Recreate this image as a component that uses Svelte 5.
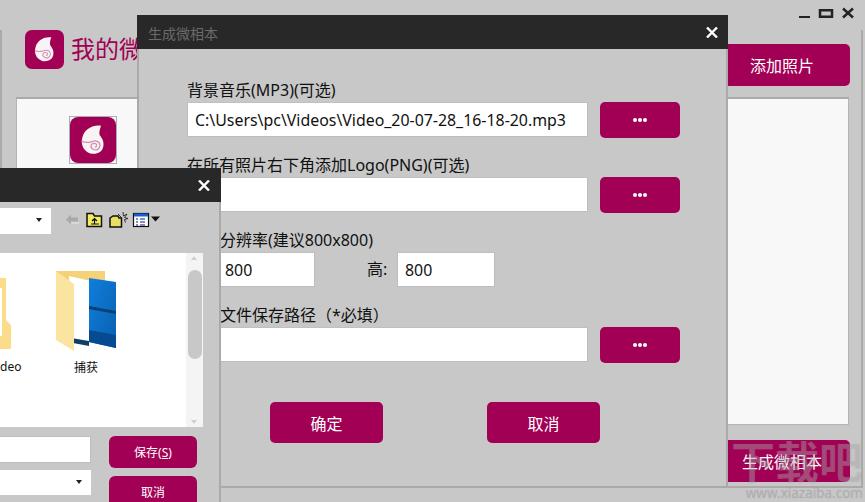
<script>
	const shell = "M27 7.500C20 6.500 13 10 11 17c-2 6 0 12 6 14.500 5 1.500 11 0 12-6 .8-4-1-7-3-9.500-1-2 0-6 1-8.500z";
</script>

{#snippet logo(size)}
	<svg class="logo" width={size} height={size} viewBox="0 0 40 40">
		<rect width="40" height="40" rx="7" fill="#a20055" />
		<path d={shell} fill="#f8f3f5" />
		<path d="M10 21c4 2 7 1 9 .5 3-1.500 7-.5 7 3s-3 5-6 3.500-2-5 1-5 2.500 3.500 .5 3" fill="none" stroke="#d68db0" stroke-width="1.100" />
	</svg>
{/snippet}

{#snippet dots()}
	<button class="btn dots" aria-label="browse"><i></i><i></i><i></i></button>
{/snippet}

{#snippet closeIcon()}
	<svg class="x" width="12" height="11" viewBox="0 0 12 11">
		<path d="M1 .5l10 10M11 .5l-10 10" stroke="#fff" stroke-width="2.400" fill="none" />
	</svg>
{/snippet}

<div class="screen">
	<section class="main-win">
		<div class="winbtns">
			<svg width="56" height="14" viewBox="0 0 56 14" fill="none" stroke="#222">
				<path d="M1 10h11" stroke-width="2" />
				<rect x="22" y="3.250" width="12" height="6.500" stroke-width="2.500" />
				<path d="M45 1.500l10 9M55 1.500L45 10.500" stroke-width="2.400" />
			</svg>
		</div>
		<div class="frame">
			<header class="top">
				<div class="brand">
					{@render logo(39)}
					<span class="app-title">我的微相本</span>
				</div>
				<button class="btn big">添加照片</button>
			</header>
			<div class="lists">
				<div class="photos">
					<div class="thumb">{@render logo(46)}</div>
				</div>
				<div class="names"></div>
			</div>
			<footer class="bottom">
				<button class="btn big">生成微相本</button>
			</footer>
		</div>
	</section>

	<section class="modal">
		<div class="titlebar modal-title">
			<span class="caption">生成微相本</span>
			{@render closeIcon()}
		</div>
		<div class="form">
			<label for="mp3">背景音乐(MP3)(可选)</label>
			<div class="row">
				<input id="mp3" value="C:\Users\pc\Videos\Video_20-07-28_16-18-20.mp3" />
				{@render dots()}
			</div>
			<label for="png">在所有照片右下角添加Logo(PNG)(可选)</label>
			<div class="row">
				<input id="png" />
				{@render dots()}
			</div>
			<label for="w" class="indent">分辨率(建议800x800)</label>
			<div class="row size">
				<input id="w" class="num first" value="800" />
				<span class="hi">高:</span>
				<input class="num" value="800" />
			</div>
			<label for="out" class="indent">文件保存路径（*必填）</label>
			<div class="row">
				<input id="out" />
				{@render dots()}
			</div>
			<div class="actions">
				<button class="btn act">确定</button>
				<button class="btn act">取消</button>
			</div>
		</div>
	</section>

	<section class="dialog">
		<div class="titlebar dlg-title">{@render closeIcon()}</div>
		<div class="tools">
			<div class="combo"><i class="caret"></i></div>
			<svg width="96" height="16" viewBox="0 0 96 16" class="toolicons">
				<path d="M1 7.500l5-5v3h7v4H6v3z" fill="#a9a9a9" />
				<path d="M6 11h8" stroke="#e8e8e8" />
				<path d="M22 4V1.500h6l1.500 2.500H36.500v10.500H22z" fill="#f1ec62" stroke="#111" stroke-width="1.500" />
				<path d="M29.500 11.500V6.500m-2.500 2.500l2.500-2.500L32 9M26 12h8" stroke="#111" fill="none" stroke-width="1.200" />
				<path d="M45 6l3-2h5l1 2h2.500v9H45z" fill="#e8e062" stroke="#111" stroke-width="1.500" />
				<path d="M58 0l.5 4 3.500-2-2.500 3.500 3.500 1-3.500 1 1 3M53 2l3 3" stroke="#222" fill="none" stroke-width=".9" />
				<rect x="68.500" y="1.500" width="15" height="13" fill="#fff" stroke="#111" stroke-width="1.200" />
				<rect x="69" y="1.500" width="14" height="3" fill="#1a5fd0" />
				<path d="M71 7h2m2 0h5M71 10h2m2 0h5M71 13h2m2 0h5" stroke="#0a1a88" stroke-width="1.200" />
				<path d="M86 4.500h9l-4.500 5z" fill="#111" />
			</svg>
		</div>
		<div class="browser">
			<div class="files">
				<div class="file cut">
					<svg width="11" height="72" viewBox="0 0 11 72">
						<path d="M0 0h6v42l5 5v24H0z" fill="#fbdc8b" />
						<path d="M0 10h2v48H0z" fill="#fff" />
					</svg>
					<span>deo</span>
				</div>
				<div class="file capture">
					<svg width="66" height="84" viewBox="0 0 66 84">
						<defs>
							<linearGradient id="win" x1="0" y1="0" x2="1" y2="1">
								<stop offset="0" stop-color="#0f7fdc" />
								<stop offset="1" stop-color="#0a5fb0" />
							</linearGradient>
						</defs>
						<path d="M1 1h49v12L20 40 1 40z" fill="#f3d27a" />
						<path d="M14 6l22 5v60l-20-3z" fill="#fff" />
						<path d="M34 8l27 4v66l-27-6z" fill="url(#win)" />
						<path d="M34 36l27 5v3l-27-5z" fill="#0a3f78" />
						<path d="M34 60l27 5v13l-27-6z" fill="#064a92" />
						<path d="M16 68l18 3v5l-16-3z" fill="#123c68" />
						<path d="M1 1l18 13v67L1 70z" fill="#fbe3a0" />
					</svg>
					<span>捕获</span>
				</div>
			</div>
			<div class="scroll">
				<i class="up"></i>
				<div class="thumbbar"></div>
				<i class="down"></i>
			</div>
		</div>
		<div class="dlg-foot">
			<div class="fields">
				<div class="field"></div>
				<div class="field pick"><i class="caret"></i></div>
			</div>
			<div class="dlg-btns">
				<button class="btn small">保存(<u>S</u>)</button>
				<button class="btn small">取消</button>
			</div>
		</div>
	</section>

	<div class="mark">
		<span class="mark-cn">下载吧</span>
		<span class="mark-en">www.xiazaiba.com</span>
	</div>
</div>

<style>
	:global(body) {
		margin: 0;
		background: #c8c8c8;
	}

	.screen {
		position: relative;
		width: 865px;
		height: 502px;
		overflow: hidden;
		background: #c8c8c8;
		font-family: "Noto Sans", "Noto Sans CJK SC", sans-serif;
		color: #111;
	}

	.btn {
		border: 0;
		padding: 0;
		background: #a20055;
		color: #fff;
		border-radius: 5px;
		font: inherit;
	}

	.main-win {
		width: 865px;
		height: 502px;
		display: flex;
		flex-direction: column;
	}

	.winbtns {
		height: 30px;
		box-sizing: border-box;
		padding: 7px 11px 0 0;
		display: flex;
		justify-content: flex-end;
	}

	.frame {
		width: 863px;
		height: 458px;
		box-sizing: border-box;
		border-left: 2px solid #aaa;
		border-right: 2px solid #aaa;
		border-bottom: 2px solid #aaa;
		padding: 0 11px 0 14px;
	}

	.top {
		display: flex;
		justify-content: space-between;
		height: 67px;
		padding-left: 9px;
	}

	.brand {
		display: flex;
		align-items: flex-start;
		gap: 7px;
	}

	.logo {
		display: block;
	}

	.app-title {
		font-size: 24px;
		line-height: 38px;
		color: #a20055;
	}

	.big {
		width: 150px;
		height: 42px;
		margin-top: 14px;
		font-size: 16px;
		padding-left: 14px;
	}

	.lists {
		display: flex;
		justify-content: space-between;
		height: 328px;
	}

	.photos,
	.names {
		box-sizing: border-box;
		background: #f8f8f8;
		border: 1px solid #b4b4b4;
		border-top: 2px solid #aaa;
		width: 500px;
		padding: 17px 0 0 52px;
	}

	.names {
		width: 150px;
		margin-right: 1px;
	}

	.thumb {
		width: 48px;
		height: 48px;
		box-sizing: border-box;
		border: 1px solid #a8adb8;
	}

	.bottom {
		display: flex;
		justify-content: flex-end;
		margin-top: 1px;
	}

	.modal {
		position: absolute;
		left: 137px;
		top: 15px;
		width: 591px;
		height: 473px;
		box-sizing: border-box;
		background: #c8c8c8;
		border: 2px solid #aaa;
		border-top: 0;
	}

	.titlebar {
		display: flex;
		align-items: center;
		justify-content: space-between;
		height: 34px;
		background: #282828;
	}

	.modal-title {
		margin: 0 -2px;
		padding: 0 10px 0 11px;
		font-size: 14px;
		color: #6c6a68;
	}

	.caption {
		padding-top: 2px;
	}

	.x {
		display: block;
	}

	.form {
		padding: 30px 0 0 48px;
		display: flex;
		flex-direction: column;
	}

	label {
		font-size: 16px;
		line-height: 22px;
		height: 23px;
		color: #111;
		white-space: nowrap;
	}

	.indent {
		padding-left: 33px;
	}

	.row {
		display: flex;
		align-items: flex-start;
		gap: 12px;
		height: 52px;
	}

	input {
		box-sizing: border-box;
		width: 401px;
		height: 35px;
		border: 1px solid #bdbdbd;
		border-top-color: #c0c0c0;
		outline: 0;
		background: #fff;
		padding: 0 7px;
		font: inherit;
		font-size: 15.900px;
		color: #111;
	}

	.dots {
		width: 80px;
		height: 36px;
		display: flex;
		align-items: center;
		justify-content: center;
		gap: 1px;
	}

	.dots i {
		width: 4px;
		height: 4px;
		border-radius: 50%;
		background: #fff;
	}

	.size {
		padding-left: 30px;
		gap: 0;
	}

	.num {
		width: 98px;
	}

	.first {
		padding-left: 7px;
	}

	.hi {
		width: 82px;
		box-sizing: border-box;
		padding-left: 52px;
		line-height: 35px;
		font-size: 16px;
	}

	.actions {
		display: flex;
		gap: 104px;
		padding: 23px 0 0 83px;
	}

	.act {
		width: 113px;
		height: 41px;
		font-size: 16px;
	}

	.dialog {
		position: absolute;
		left: 0;
		top: 168px;
		width: 221px;
		height: 334px;
		box-sizing: border-box;
		background: #c8c8c8;
		border-right: 2px solid #aaa;
		display: flex;
		flex-direction: column;
	}

	.dlg-title {
		flex: none;
		justify-content: flex-end;
		padding-right: 11px;
		margin-right: -2px;
	}

	.tools {
		flex: none;
		height: 51px;
		display: flex;
		align-items: flex-start;
		padding-top: 6px;
		box-sizing: border-box;
	}

	.combo {
		width: 51px;
		height: 26px;
		background: #fff;
		position: relative;
	}

	.caret {
		position: absolute;
		top: 10px;
		right: 9px;
		border: 3px solid transparent;
		border-top: 4px solid #222;
		border-bottom: 0;
	}

	.toolicons {
		margin: 4px 0 0 14px;
		display: block;
	}

	.browser {
		flex: none;
		display: flex;
		width: 203px;
		height: 174px;
		background: #fff;
	}

	.files {
		flex: 1;
		display: flex;
		gap: 44px;
		font-size: 12px;
	}

	.file {
		display: flex;
		flex-direction: column;
	}

	.cut {
		width: 11px;
		padding-top: 25px;
		height: 149px;
	}

	.cut span {
		margin-top: 9px;
		white-space: nowrap;
		line-height: 16px;
		width: 30px;
	}

	.capture {
		padding-top: 17px;
		align-items: flex-start;
	}

	.capture svg {
		margin-bottom: 6px;
	}

	.capture span {
		margin-left: 19px;
		line-height: 16px;
	}

	.scroll {
		width: 17px;
		background: #f4f4f4;
		position: relative;
	}

	.thumbbar {
		position: absolute;
		top: 17px;
		left: 2px;
		width: 14px;
		height: 89px;
		background: #c8c8c8;
		border-radius: 7px;
	}

	.up,
	.down {
		position: absolute;
		left: 5px;
		border: 3.500px solid transparent;
	}

	.up {
		top: 3px;
		border-bottom: 4px solid #d0d0d0;
		border-top: 0;
	}

	.down {
		bottom: 3px;
		border-top: 4px solid #d0d0d0;
		border-bottom: 0;
	}

	.dlg-foot {
		display: flex;
		gap: 18px;
		padding-top: 9px;
	}

	.fields {
		display: flex;
		flex-direction: column;
		gap: 7px;
	}

	.field {
		box-sizing: border-box;
		width: 91px;
		height: 27px;
		background: #fff;
		border: 1px solid #bdbdbd;
		border-left: 0;
		position: relative;
	}

	.pick {
		height: 25px;
		border: 0;
	}

	.dlg-btns {
		display: flex;
		flex-direction: column;
		gap: 8px;
	}

	.small {
		width: 88px;
		height: 32px;
		font-size: 12px;
		border-radius: 6px;
	}

	.mark {
		position: absolute;
		right: 2px;
		top: 438px;
		display: flex;
		flex-direction: column;
		align-items: flex-end;
		pointer-events: none;
		white-space: nowrap;
		color: rgba(215, 215, 215, 0.22);
		text-shadow: 0 0 1px rgba(120, 120, 120, 0.3);
	}

	.mark-cn {
		font-size: 44px;
		line-height: 48px;
		font-weight: 700;
	}

	.mark-en {
		font-size: 13.500px;
		line-height: 15px;
		color: rgba(170, 170, 170, 0.5);
	}
</style>
